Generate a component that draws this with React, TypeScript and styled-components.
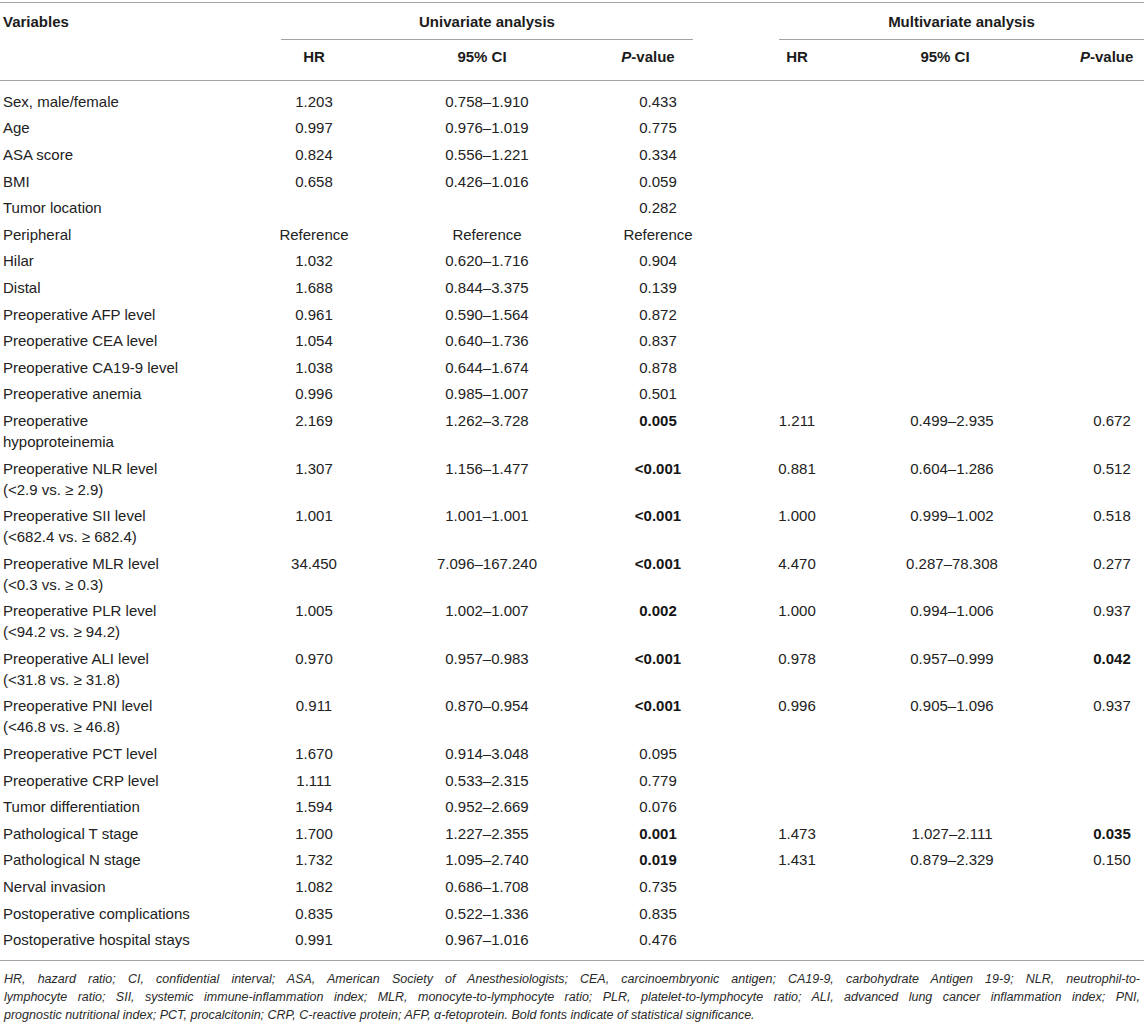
import React from "react";
import styled, { createGlobalStyle } from "styled-components";

const GlobalStyle = createGlobalStyle`
  html, body {
    margin: 0;
    padding: 0;
    background: #ffffff;
  }
  body {
    font-family: "Liberation Sans", Arial, Helvetica, sans-serif;
    color: #222222;
  }
`;

const COLS = "240px 148px 198px 144px 20px 94px 216px 84px";
const LINE = "#a3a3a3";

const Page = styled.div`
  width: 1144px;
  padding-top: 2px;
  box-sizing: border-box;
`;

const Table = styled.div`
  border-top: 1px solid ${LINE};
`;

const HeadRow = styled.div`
  display: grid;
  grid-template-columns: ${COLS};
  font-size: 15px;
  line-height: 21px;
  font-weight: 700;
  color: #1c1c1c;
`;

const SubHeadRow = styled(HeadRow)`
  border-bottom: 1px solid ${LINE};
`;

const VarHead = styled.div`
  grid-column: 1 / 2;
  padding: 8px 0 7px 3px;
`;

const GroupHead = styled.div<{ $from: number; $to: number; $ml: number; $mr: number }>`
  grid-column: ${(p) => p.$from} / ${(p) => p.$to};
  margin-left: ${(p) => p.$ml}px;
  margin-right: ${(p) => p.$mr}px;
  padding: 8px 0 7px;
  text-align: center;
  border-bottom: 1px solid ${LINE};
`;

const ColHead = styled.div<{ $col: number; $shift?: number; $pl?: number }>`
  grid-column: ${(p) => p.$col} / ${(p) => p.$col + 1};
  padding: 6px ${(p) => (p.$shift || 0) * 2}px 13px ${(p) => p.$pl || 0}px;
  text-align: center;
  white-space: nowrap;
  em {
    font-style: italic;
  }
`;

const Body = styled.div`
  padding: 7px 0 7px;
  border-bottom: 1px solid ${LINE};
`;

const Row = styled.div`
  display: grid;
  grid-template-columns: ${COLS};
  font-size: 15px;
  line-height: 21px;
  padding: 2.8px 0;
`;

const LabelCell = styled.div`
  grid-column: 1 / 2;
  padding-left: 3px;
  white-space: nowrap;
`;

const ValueCell = styled.div<{ $col: number; $bold?: boolean; $pl?: number }>`
  grid-column: ${(p) => p.$col} / ${(p) => p.$col + 1};
  padding-left: ${(p) => p.$pl || 0}px;
  text-align: center;
  white-space: nowrap;
  font-weight: ${(p) => (p.$bold ? 700 : 400)};
  color: ${(p) => (p.$bold ? "#151515" : "#222222")};
`;

const Footnote = styled.div`
  padding: 9px 4px 0 4px;
  font-size: 12.5px;
  line-height: 18px;
  font-style: italic;
  color: #2a2a2a;
`;

const NoteLine = styled.div<{ $last?: boolean }>`
  text-align: ${(p) => (p.$last ? "left" : "justify")};
  text-align-last: ${(p) => (p.$last ? "left" : "justify")};
`;

type RowData = {
  label: string[];
  v: string[];
};

const rows: RowData[] = [
  { label: ["Sex, male/female"], v: ["1.203", "0.758–1.910", "0.433"] },
  { label: ["Age"], v: ["0.997", "0.976–1.019", "0.775"] },
  { label: ["ASA score"], v: ["0.824", "0.556–1.221", "0.334"] },
  { label: ["BMI"], v: ["0.658", "0.426–1.016", "0.059"] },
  { label: ["Tumor location"], v: ["", "", "0.282"] },
  { label: ["Peripheral"], v: ["Reference", "Reference", "Reference"] },
  { label: ["Hilar"], v: ["1.032", "0.620–1.716", "0.904"] },
  { label: ["Distal"], v: ["1.688", "0.844–3.375", "0.139"] },
  { label: ["Preoperative AFP level"], v: ["0.961", "0.590–1.564", "0.872"] },
  { label: ["Preoperative CEA level"], v: ["1.054", "0.640–1.736", "0.837"] },
  { label: ["Preoperative CA19-9 level"], v: ["1.038", "0.644–1.674", "0.878"] },
  { label: ["Preoperative anemia"], v: ["0.996", "0.985–1.007", "0.501"] },
  {
    label: ["Preoperative", "hypoproteinemia"],
    v: ["2.169", "1.262–3.728", "*0.005", "1.211", "0.499–2.935", "0.672"],
  },
  {
    label: ["Preoperative NLR level", "(<2.9 vs. ≥ 2.9)"],
    v: ["1.307", "1.156–1.477", "*<0.001", "0.881", "0.604–1.286", "0.512"],
  },
  {
    label: ["Preoperative SII level", "(<682.4 vs. ≥ 682.4)"],
    v: ["1.001", "1.001–1.001", "*<0.001", "1.000", "0.999–1.002", "0.518"],
  },
  {
    label: ["Preoperative MLR level", "(<0.3 vs. ≥ 0.3)"],
    v: ["34.450", "7.096–167.240", "*<0.001", "4.470", "0.287–78.308", "0.277"],
  },
  {
    label: ["Preoperative PLR level", "(<94.2 vs. ≥ 94.2)"],
    v: ["1.005", "1.002–1.007", "*0.002", "1.000", "0.994–1.006", "0.937"],
  },
  {
    label: ["Preoperative ALI level", "(<31.8 vs. ≥ 31.8)"],
    v: ["0.970", "0.957–0.983", "*<0.001", "0.978", "0.957–0.999", "*0.042"],
  },
  {
    label: ["Preoperative PNI level", "(<46.8 vs. ≥ 46.8)"],
    v: ["0.911", "0.870–0.954", "*<0.001", "0.996", "0.905–1.096", "0.937"],
  },
  { label: ["Preoperative PCT level"], v: ["1.670", "0.914–3.048", "0.095"] },
  { label: ["Preoperative CRP level"], v: ["1.111", "0.533–2.315", "0.779"] },
  { label: ["Tumor differentiation"], v: ["1.594", "0.952–2.669", "0.076"] },
  {
    label: ["Pathological T stage"],
    v: ["1.700", "1.227–2.355", "*0.001", "1.473", "1.027–2.111", "*0.035"],
  },
  {
    label: ["Pathological N stage"],
    v: ["1.732", "1.095–2.740", "*0.019", "1.431", "0.879–2.329", "0.150"],
  },
  { label: ["Nerval invasion"], v: ["1.082", "0.686–1.708", "0.735"] },
  { label: ["Postoperative complications"], v: ["0.835", "0.522–1.336", "0.835"] },
  { label: ["Postoperative hospital stays"], v: ["0.991", "0.967–1.016", "0.476"] },
];

const valueCols = [2, 3, 4, 6, 7, 8];

const noteLines = [
  "HR, hazard ratio; CI, confidential interval; ASA, American Society of Anesthesiologists; CEA, carcinoembryonic antigen; CA19-9, carbohydrate Antigen 19-9; NLR, neutrophil-to-",
  "lymphocyte ratio; SII, systemic immune-inflammation index; MLR, monocyte-to-lymphocyte ratio; PLR, platelet-to-lymphocyte ratio; ALI, advanced lung cancer inflammation index; PNI,",
  "prognostic nutritional index; PCT, procalcitonin; CRP, C-reactive protein; AFP, α-fetoprotein. Bold fonts indicate of statistical significance.",
];

export default function App() {
  return (
    <Page>
      <GlobalStyle />
      <Table>
        <HeadRow>
          <VarHead>Variables</VarHead>
          <GroupHead $from={2} $to={5} $ml={41} $mr={37}>
            Univariate analysis
          </GroupHead>
          <GroupHead $from={6} $to={9} $ml={29} $mr={0}>
            Multivariate analysis
          </GroupHead>
        </HeadRow>
        <SubHeadRow>
          <ColHead $col={2}>HR</ColHead>
          <ColHead $col={3} $shift={5}>
            95% CI
          </ColHead>
          <ColHead $col={4} $shift={10}>
            <em>P</em>-value
          </ColHead>
          <ColHead $col={6}>HR</ColHead>
          <ColHead $col={7} $shift={7}>
            95% CI
          </ColHead>
          <ColHead $col={8} $pl={20} $shift={6}>
            <em>P</em>-value
          </ColHead>
        </SubHeadRow>
        <Body>
          {rows.map((r, i) => (
            <Row key={i}>
              <LabelCell>
                {r.label.map((l, j) => (
                  <div key={j}>{l}</div>
                ))}
              </LabelCell>
              {r.v.map((val, k) => {
                const bold = val.startsWith("*");
                const text = bold ? val.slice(1) : val;
                const col = valueCols[k];
                return (
                  <ValueCell key={k} $col={col} $bold={bold} $pl={col === 8 ? 20 : 0}>
                    {text}
                  </ValueCell>
                );
              })}
            </Row>
          ))}
        </Body>
      </Table>
      <Footnote>
        {noteLines.map((t, i) => (
          <NoteLine key={i} $last={i === noteLines.length - 1}>
            {t}
          </NoteLine>
        ))}
      </Footnote>
    </Page>
  );
}
